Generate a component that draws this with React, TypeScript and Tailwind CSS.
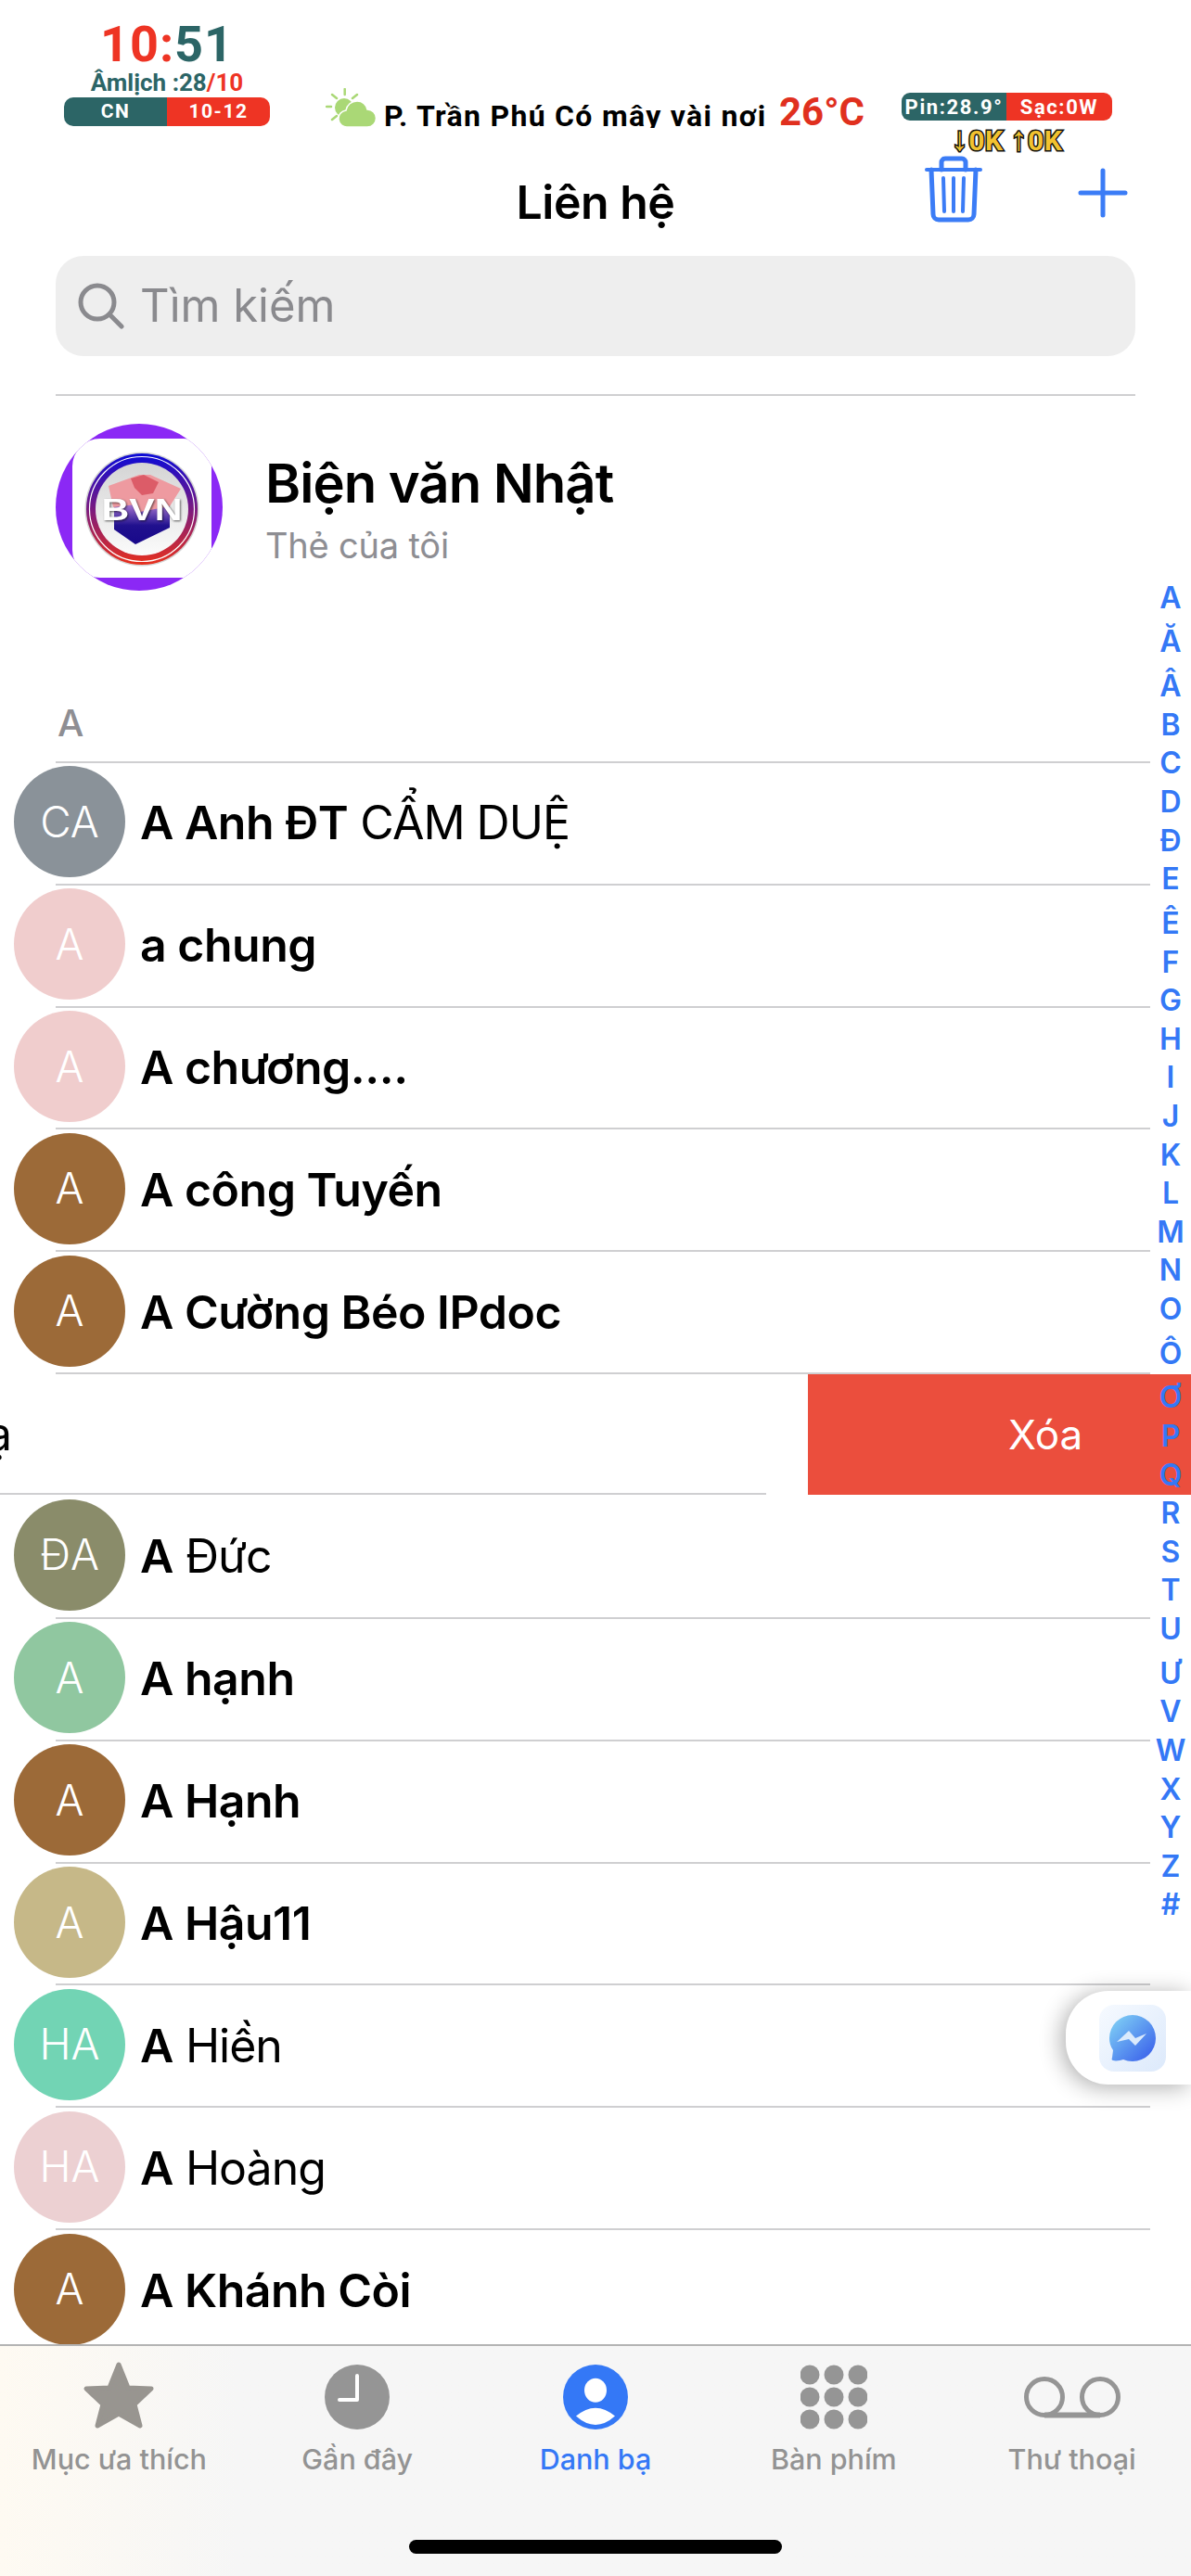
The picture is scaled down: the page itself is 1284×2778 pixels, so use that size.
import type { ReactNode } from 'react'

const SF = 'font-["Inter","Liberation_Sans",sans-serif]'

type Contact = { initials: string; color: string; bold: string; light?: string; noBorder?: boolean }

const TOP_CONTACTS: Contact[] = [
  { initials: 'CA', color: 'bg-[#8a9299]', bold: 'A Anh ĐT', light: ' CẨM DUỆ' },
  { initials: 'A', color: 'bg-[#f0cdcd]', bold: 'a chung' },
  { initials: 'A', color: 'bg-[#f0cdcd]', bold: 'A chương....' },
  { initials: 'A', color: 'bg-[#9c6a38]', bold: 'A công Tuyến' },
  { initials: 'A', color: 'bg-[#9c6a38]', bold: 'A Cường Béo IPdoc' },
]

const BOTTOM_CONTACTS: Contact[] = [
  { initials: 'ĐA', color: 'bg-[#8a8c6a]', bold: 'A', light: ' Đức', noBorder: true },
  { initials: 'A', color: 'bg-[#90c7a0]', bold: 'A hạnh' },
  { initials: 'A', color: 'bg-[#9c6a38]', bold: 'A Hạnh' },
  { initials: 'A', color: 'bg-[#c6b888]', bold: 'A Hậu11' },
  { initials: 'HA', color: 'bg-[#72d4b4]', bold: 'A', light: ' Hiền' },
  { initials: 'HA', color: 'bg-[#ecd0d2]', bold: 'A', light: ' Hoàng' },
  { initials: 'A', color: 'bg-[#9c6a38]', bold: 'A Khánh Còi' },
]

const INDEX = ['A', 'Ă', 'Â', 'B', 'C', 'D', 'Đ', 'E', 'Ê', 'F', 'G', 'H', 'I', 'J', 'K', 'L', 'M', 'N', 'O', 'Ô', 'Ơ', 'P', 'Q', 'R', 'S', 'T', 'U', 'Ư', 'V', 'W', 'X', 'Y', 'Z', '#']
const TALL = ['Ă', 'Â', 'Ê', 'Ô', 'Ơ', 'Ư']

function ContactRow({ c }: { c: Contact }) {
  return (
    <div className={`h-[131.83px] ml-[60px] mr-[44px] flex items-center ${c.noBorder ? '' : 'border-t-2 border-[#cfcfd1]'}`}>
      <div className={`-ml-[45px] -mt-[3px] w-[120px] h-[120px] shrink-0 rounded-full flex items-center justify-center text-white text-[46px] font-light ${c.color}`}>
        {c.initials}
      </div>
      <div className="ml-[16px] text-[50px] text-black whitespace-pre tracking-[-0.5px]">
        <span className="font-semibold">{c.bold}</span>
        {c.light && <span className="font-normal tracking-[-1px]">{c.light}</span>}
      </div>
    </div>
  )
}

function StatusWidgets() {
  return (
    <div className='h-[164px] flex items-start font-["Roboto",sans-serif] font-bold'>
      <div className="ml-[69px] mt-[20px] w-[222px] flex flex-col items-center">
        <div className="text-[54px] leading-[56px] tracking-[1px]">
          <span className="text-[#ee3424]">10:</span>
          <span className="text-[#2c6566]">51</span>
        </div>
        <div className="text-[26px] leading-[26px] text-[#2c6566]">
          Âmlịch :28<span className="text-[#ee3424]">/10</span>
        </div>
        <div className="mt-[3px] w-full h-[31px] flex rounded-[10px] overflow-hidden text-white text-[21px] tracking-[1.5px]">
          <div className="w-[111px] bg-[#2c6566] flex items-center justify-center">CN</div>
          <div className="flex-1 bg-[#ee3424] flex items-center justify-center">10-12</div>
        </div>
      </div>

      <div className="ml-[60px] mt-[94px] w-[581px] h-[44px] flex items-end overflow-hidden">
        <svg viewBox="0 0 55 43" className="w-[55px] h-[43px] shrink-0">
          <g stroke="#aad876" strokeWidth="2.5" strokeLinecap="round">
            <path d="M20.700 1v6M7 7l5 4M1 20h5M7 34l5-4M34 7l-5 4" />
          </g>
          <circle cx="20" cy="21" r="10" fill="#aad876" />
          <path d="M24 42a9 9 0 0 1-2-18c1-6 6-10 12-10s10 4 11 9a9.500 9.500 0 0 1 0 19z" fill="#aad876" stroke="#fff" strokeWidth="1.500" />
        </svg>
        <div className="ml-[8px] text-[32px] leading-[38px] h-[32px] tracking-[1.3px] text-black whitespace-nowrap overflow-hidden">P. Trần Phú Có mây vài nơi</div>
        <div className="ml-[15px] text-[42px] leading-[38px] h-[36px] text-[#e0301e]">26°C</div>
      </div>

      <div className="ml-[40px] mt-[100px] w-[227px] flex flex-col items-center">
        <div className="w-full h-[30px] flex rounded-[9px] overflow-hidden text-white text-[22px] tracking-[1.6px] whitespace-nowrap">
          <div className="w-[113px] bg-[#2c6566] flex items-center justify-center">Pin:28.9°</div>
          <div className="flex-1 bg-[#ee3424] flex items-center justify-center">Sạc:0W</div>
        </div>
        <div className="mt-[6px] text-[30px] leading-[28px] tracking-[0.5px] text-[#f2c230] [-webkit-text-stroke:3px_#111] [paint-order:stroke_fill] whitespace-nowrap">
          <span className="text-[36px] leading-[28px]">↓</span>0K <span className="text-[36px] leading-[28px]">↑</span>0K
        </div>
      </div>
    </div>
  )
}

function Header() {
  return (
    <div className="relative h-[112px] -mt-[2px] flex items-center justify-center">
      <div className={`${SF} text-[50px] font-semibold text-black tracking-[-0.5px]`}>Liên hệ</div>
      <div className="absolute right-[68px] top-[6px] flex items-start gap-[103px]">
        <svg viewBox="0 0 62 72" fill="none" stroke="#3b7cf6" strokeLinecap="round" strokeLinejoin="round" className="w-[62px] h-[72px]">
          <path d="M2 15h58" strokeWidth="4" />
          <path d="M18 15V7a4 4 0 0 1 4-4h18a4 4 0 0 1 4 4v8" strokeWidth="5" />
          <path d="M7 15l2 48a6 6 0 0 0 6 6h32a6 6 0 0 0 6-6l2-48" strokeWidth="5" />
          <path d="M20 24l1 36M31 24v36M42 24l-1 36" strokeWidth="4" />
        </svg>
        <svg viewBox="0 0 54 54" fill="none" stroke="#3b7cf6" strokeWidth="5" strokeLinecap="round" className="w-[54px] h-[54px] mt-[13px]">
          <path d="M27 3v48M3 27h48" />
        </svg>
      </div>
    </div>
  )
}

function Logo() {
  return (
    <div className="relative w-[180px] h-[180px] rounded-full bg-[#8b28f5] shrink-0 overflow-hidden">
      <div className="absolute left-[18px] top-[16px] w-[150px] h-[150px] rounded-[30px] bg-white" />
      <svg viewBox="0 0 124 126" className="absolute left-[31px] top-[29px] w-[124px] h-[126px]">
        <defs>
          <linearGradient id="ring" x1="0" y1="0" x2="0" y2="1">
            <stop offset="0" stopColor="#0a0ad8" />
            <stop offset="0.500" stopColor="#7a1a80" />
            <stop offset="1" stopColor="#e8301c" />
          </linearGradient>
          <linearGradient id="disc" x1="0" y1="0" x2="0" y2="1">
            <stop offset="0" stopColor="#d4d4d4" />
            <stop offset="1" stopColor="#fbfbfb" />
          </linearGradient>
          <linearGradient id="box" x1="0" y1="0" x2="0" y2="1">
            <stop offset="0" stopColor="#b480d8" />
            <stop offset="0.550" stopColor="#20108e" />
            <stop offset="1" stopColor="#18088a" />
          </linearGradient>
        </defs>
        <circle cx="62" cy="63" r="61.500" fill="#d4d4d4" />
        <circle cx="62" cy="63" r="60" fill="url(#ring)" />
        <circle cx="62" cy="63" r="56.500" fill="none" stroke="#fff" strokeWidth="1.200" />
        <circle cx="62" cy="63" r="50" fill="url(#disc)" />
        <path d="M32 56h60v27l-37 18-23-16z" fill="url(#box)" />
        <path d="M26 38l33-12h12l33 15-12 19-32 6-5-8-24 3z" fill="#ee9aa0" />
        <path d="M50 30l14-4 16 8-6 12-12 2-8-8z" fill="#dc5c68" />
        <text x="62" y="75" textAnchor="middle" textLength="87" lengthAdjust="spacingAndGlyphs" fill="#fff" className="drop-shadow-[1px_1px_1px_rgba(0,0,0,0.6)]" fontFamily="Liberation Sans" fontWeight="700" fontSize="34">BVN</text>
      </svg>
    </div>
  )
}

function Tab({ label, active, icon }: { label: string; active?: boolean; icon: ReactNode }) {
  return (
    <div className="flex flex-col items-center">
      <div className="h-[94px] pt-[16px] flex items-center justify-center">{icon}</div>
      <div className={`mt-[10px] text-[30.500px] leading-[36px] font-medium whitespace-nowrap ${active ? 'text-[#3478f6]' : 'text-[#939393]'}`}>{label}</div>
    </div>
  )
}

function TabBar() {
  return (
    <div className={`${SF} h-[250px] shrink-0 border-t-2 border-[#b4b4b4] bg-linear-to-r from-[#fefaf2] to-[#f6f6f6] to-[20%] flex flex-col items-center`}>
      <div className="w-full grid grid-cols-5">
        <Tab
          label="Mục ưa thích"
          icon={
            <svg viewBox="0 0 80 74" className="w-[80px] h-[74px] mt-[-4px]">
              <path d="M40 4l10 25 25 1-18 17 6 23-23-13-23 13 6-23L5 30l25-1z" fill="#989590" stroke="#989590" strokeWidth="5" strokeLinejoin="round" />
            </svg>
          }
        />
        <Tab
          label="Gần đây"
          icon={
            <svg viewBox="0 0 70 70" className="w-[70px] h-[70px]">
              <circle cx="35" cy="35" r="35" fill="#959595" />
              <path d="M35 12v26H16" fill="none" stroke="#fff" strokeWidth="4" strokeLinecap="round" strokeLinejoin="round" />
            </svg>
          }
        />
        <Tab
          label="Danh bạ"
          active
          icon={
            <svg viewBox="0 0 70 70" className="w-[70px] h-[70px]">
              <circle cx="35" cy="35" r="35" fill="#3478f6" />
              <ellipse cx="35" cy="27.700" rx="12" ry="13" fill="#fff" />
              <path d="M14 55.600Q35 37.800 56 55.600Q35 74.400 14 55.600z" fill="#fff" />
            </svg>
          }
        />
        <Tab
          label="Bàn phím"
          icon={
            <svg viewBox="0 0 72 70" className="w-[72px] h-[70px]" fill="#959595">
              {[11, 35, 59].map((y) =>
                [10, 36, 62].map((x) => <circle key={`${x}-${y}`} cx={x} cy={y} r="10.500" />),
              )}
            </svg>
          }
        />
        <Tab
          label="Thư thoại"
          icon={
            <svg viewBox="0 0 104 46" className="w-[104px] h-[46px]" fill="none" stroke="#959595" strokeWidth="5">
              <circle cx="22" cy="23" r="19.500" />
              <circle cx="82" cy="23" r="19.500" />
              <path d="M22 42.500h60" strokeWidth="6" />
            </svg>
          }
        />
      </div>
      <div className="mt-[69px] w-[402px] h-[15px] rounded-full bg-black" />
    </div>
  )
}

export default function App() {
  return (
    <div className={`${SF} relative w-[1284px] h-[2778px] overflow-hidden bg-white flex flex-col`}>
      <StatusWidgets />
      <Header />

      <div className="mx-[60px] mt-[2px] h-[108px] rounded-[30px] bg-[#eeeeee] flex items-center pl-[24px] shrink-0">
        <svg viewBox="0 0 50 50" fill="none" stroke="#8a8a8e" strokeWidth="5" strokeLinecap="round" className="w-[50px] h-[50px]">
          <circle cx="21" cy="21" r="18" />
          <path d="M34 34l13 13" />
        </svg>
        <span className="ml-[17px] text-[49px] text-[#8a8a8e]">Tìm kiếm</span>
      </div>

      <div className="mx-[60px] mt-[41px] border-t-2 border-[#cfcfd1] shrink-0" />

      <div className="ml-[60px] mt-[30px] h-[180px] flex items-center shrink-0">
        <Logo />
        <div className="ml-[46px] mt-[2px]">
          <div className="text-[58px] leading-[72px] font-semibold text-black tracking-[-1px]">Biện văn Nhật</div>
          <div className="mt-[8px] text-[38px] leading-[46px] tracking-[-0.2px] text-[#8e8e93]">Thẻ của tôi</div>
        </div>
      </div>

      <div className="ml-[62px] mt-[120px] h-[64px] text-[40px] leading-[46px] font-medium text-[#8e8e93] shrink-0">A</div>

      <div className="flex-1 min-h-0 overflow-hidden">
        {TOP_CONTACTS.map((c) => (
          <ContactRow key={c.bold} c={c} />
        ))}

        {/* swiped row with delete action */}
        <div className="h-[132px] flex flex-col">
          <div className="ml-[60px] mr-[44px] border-t-2 border-[#cfcfd1]" />
          <div className="flex-1 flex">
            <div className="w-[826px] border-b-2 border-[#cfcfd1] flex items-center overflow-hidden">
              <span className="-ml-[15px] text-[50px] font-normal text-black">ạ</span>
            </div>
            <div className="ml-[45px] flex-1 bg-[#eb4e3d] flex items-center pl-[216px] text-[44px] text-white">Xóa</div>
          </div>
        </div>

        {BOTTOM_CONTACTS.map((c) => (
          <ContactRow key={c.bold + c.initials + (c.light ?? '')} c={c} />
        ))}
      </div>

      <TabBar />

      {/* section index overlay */}
      <div className="absolute right-0 top-[622px] w-[44px] flex flex-col items-center text-[#3478f6] text-[32px] font-semibold">
        {INDEX.map((l) => (
          <div key={l} className={`w-full flex items-end justify-center leading-[38px] ${TALL.includes(l) ? 'h-[47.800px]' : 'h-[41.600px]'}`}>
            {l}
          </div>
        ))}
      </div>

      {/* floating messenger shortcut */}
      <div className="absolute right-0 top-[2147px] w-[135px] h-[101px] rounded-l-[46px] bg-white shadow-[-4px_3px_24px_rgba(0,0,0,0.32)] flex items-center pl-[36px]">
        <div className="w-[72px] h-[72px] rounded-[16px] bg-linear-to-br from-[#f6faff] to-[#dce9fb] flex items-center justify-center">
          <svg viewBox="0 0 50 50" className="w-[50px] h-[50px]">
            <defs>
              <linearGradient id="msg" x1="0" y1="0" x2="1" y2="1">
                <stop offset="0" stopColor="#84d8f6" />
                <stop offset="1" stopColor="#3558ea" />
              </linearGradient>
            </defs>
            <path d="M25 0a25 25 0 0 1 0 50c-4 0-7-1-10-2-3 1-8 2-11 1-1 0-2-1-1-3l1-8C1 34 0 29 0 25A25 25 0 0 1 25 0z" fill="url(#msg)" />
            <path d="M8 29l13-12 7 8 12-5-12 13-7-7z" fill="#dbeafc" />
          </svg>
        </div>
      </div>
    </div>
  )
}
